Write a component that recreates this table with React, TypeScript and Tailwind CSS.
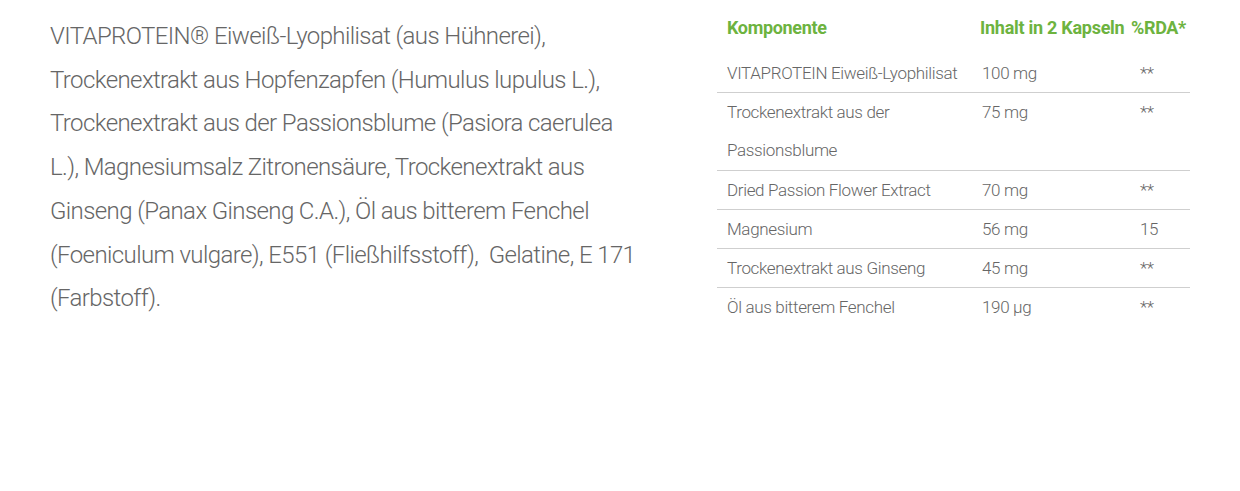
const rows = [
  { name: "VITAPROTEIN Eiweiß-Lyophilisat", amount: "100 mg", rda: "**" },
  { name: "Trockenextrakt aus der Passionsblume", amount: "75 mg", rda: "**" },
  { name: "Dried Passion Flower Extract", amount: "70 mg", rda: "**" },
  { name: "Magnesium", amount: "56 mg", rda: "15" },
  { name: "Trockenextrakt aus Ginseng", amount: "45 mg", rda: "**" },
  { name: "Öl aus bitterem Fenchel", amount: "190 µg", rda: "**" },
]

const App = () => {
  return (
    <div className="w-[1240px] h-[491px] bg-white flex font-['Roboto',sans-serif] font-light text-[#666]">
      <div className="w-[717px] pl-[50px] pt-[15px]">
        <p className="text-[24px] leading-[43.7px] tracking-[-0.025em] whitespace-nowrap">
          VITAPROTEIN® Eiweiß-Lyophilisat (aus Hühnerei),
          <br />
          Trockenextrakt aus Hopfenzapfen (Humulus lupulus L.),
          <br />
          Trockenextrakt aus der Passionsblume (Pasiora caerulea
          <br />
          L.), Magnesiumsalz Zitronensäure, Trockenextrakt aus
          <br />
          Ginseng (Panax Ginseng C.A.), Öl aus bitterem Fenchel
          <br />
          (Foeniculum vulgare), E551 (Fließhilfsstoff),&nbsp; Gelatine, E 171
          <br />
          (Farbstoff).
        </p>
      </div>
      <div className="w-[473px] pt-[9px]">
        <div className="grid grid-cols-[255px_156px_62px] text-[17px] leading-[38.2px] tracking-[-0.02em]">
          <div className="pl-[10px] pb-[7px] leading-[38px] font-bold text-[#6db33f] text-[18px]">Komponente</div>
          <div className="pl-[8px] pb-[7px] leading-[38px] font-bold text-[#6db33f] text-[18px] tracking-[-0.015em] whitespace-nowrap">Inhalt in 2 Kapseln</div>
          <div className="pl-[3px] pb-[7px] leading-[38px] font-bold text-[#6db33f] text-[18px] whitespace-nowrap">%RDA*</div>
          {rows.map((r, i) => (
            <div key={i} className={`col-span-3 grid grid-cols-subgrid ${i < rows.length - 1 ? "border-b border-[#cfcfcf]" : ""}`}>
              <div className="pl-[10px] pr-[10px]">{r.name}</div>
              <div className="pl-[10px]">{r.amount}</div>
              <div className="pl-[12px]">{r.rda}</div>
            </div>
          ))}
        </div>
      </div>
    </div>
  )
}

export default App
